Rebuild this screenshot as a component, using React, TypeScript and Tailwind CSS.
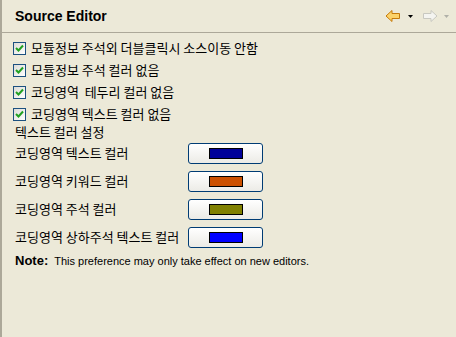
import React from 'react'

const KR = { fontFamily: '"Noto Sans CJK KR", "Noto Sans", sans-serif' }
const SANS = { fontFamily: '"Liberation Sans", Arial, sans-serif' }

const OPTIONS = [
  '모듈정보 주석외 더블클릭시 소스이동 안함',
  '모듈정보 주석 컬러 없음',
  '코딩영역\u00a0\u00a0테두리 컬러 없음',
  '코딩영역 텍스트 컬러 없음',
]

const COLORS = [
  { label: '코딩영역 텍스트 컬러', color: '#000099' },
  { label: '코딩영역 키워드 컬러', color: '#cc5000' },
  { label: '코딩영역 주석 컬러', color: '#808000' },
  { label: '코딩영역 상하주석 텍스트 컬러', color: '#0000ff' },
]

function CheckBox() {
  return (
    <span className="w-[13px] h-[13px] border border-[#1c5180] bg-gradient-to-br from-[#dcdcd7] to-white flex items-center justify-center shrink-0">
      <svg width="9" height="9" viewBox="0 0 9 9">
        <path d="M1 4 L3.5 6.5 L8 1.5" fill="none" stroke="#21a121" strokeWidth="2" />
      </svg>
    </span>
  )
}

function ColorButton({ color }: { color: string }) {
  return (
    <button className="w-[75px] h-[21px] rounded-[3px] border border-[#003c74] bg-gradient-to-b from-white to-[#ecebe6] flex items-center justify-center">
      <span className="w-[34px] h-[11px] border border-black" style={{ backgroundColor: color }} />
    </button>
  )
}

function BackArrow() {
  return (
    <svg width="16" height="14" viewBox="0 0 16 14">
      <path d="M1 7 L7 1.5 L7 4.5 L14.5 4.5 L14.5 9.5 L7 9.5 L7 12.5 Z" fill="#fcd36a" stroke="#c57a0a" strokeWidth="1" strokeLinejoin="round" />
    </svg>
  )
}

function FwdArrow() {
  return (
    <svg width="16" height="14" viewBox="0 0 16 14">
      <path d="M15 7 L9 1.5 L9 4.5 L1.5 4.5 L1.5 9.5 L9 9.5 L9 12.5 Z" fill="#f4f4f0" stroke="#c8c8c0" strokeWidth="1" strokeLinejoin="round" />
    </svg>
  )
}

function Caret({ c }: { c: string }) {
  return (
    <svg width="5" height="3" viewBox="0 0 5 3">
      <path d="M0 0 L5 0 L2.5 3 Z" fill={c} />
    </svg>
  )
}

export default function App() {
  return (
    <div className="w-[456px] h-[337px] bg-[#ece9d8] border-l-2 border-[#aca899] overflow-hidden text-black">
      <div className="h-[33px] flex items-center justify-between pl-[13px] pr-[7px] border-b border-[#aca899]">
        <span className="text-[14px] font-bold" style={SANS}>Source Editor</span>
        <div className="flex items-center">
          <BackArrow />
          <span className="ml-[7px] mr-[9px] flex"><Caret c="#000" /></span>
          <FwdArrow />
          <span className="ml-[6px] flex"><Caret c="#b0b0a8" /></span>
        </div>
      </div>

      <div className="pl-[11px] pt-[4px]" style={KR}>
        {OPTIONS.map(o => (
          <div key={o} className="h-[22px] flex items-center gap-[5px] text-[13px] leading-[16px]">
            <CheckBox />
            <span>{o}</span>
          </div>
        ))}
        <div className="h-[14px] flex items-center text-[13px] leading-[14px] ml-[2px]">텍스트 컬러 설정</div>

        <div>
          {COLORS.map(c => (
            <div key={c.label} className="h-[28px] flex items-center text-[13px] leading-[16px] ml-[2px]">
              <span className="w-[173px]">{c.label}</span>
              <ColorButton color={c.color} />
            </div>
          ))}
        </div>

        <div className="h-[20px] flex items-center ml-[2px]" style={SANS}>
          <span className="text-[13px] font-bold mr-[6px]">Note:</span>
          <span className="text-[11px]">This preference may only take effect on new editors.</span>
        </div>
      </div>
    </div>
  )
}
